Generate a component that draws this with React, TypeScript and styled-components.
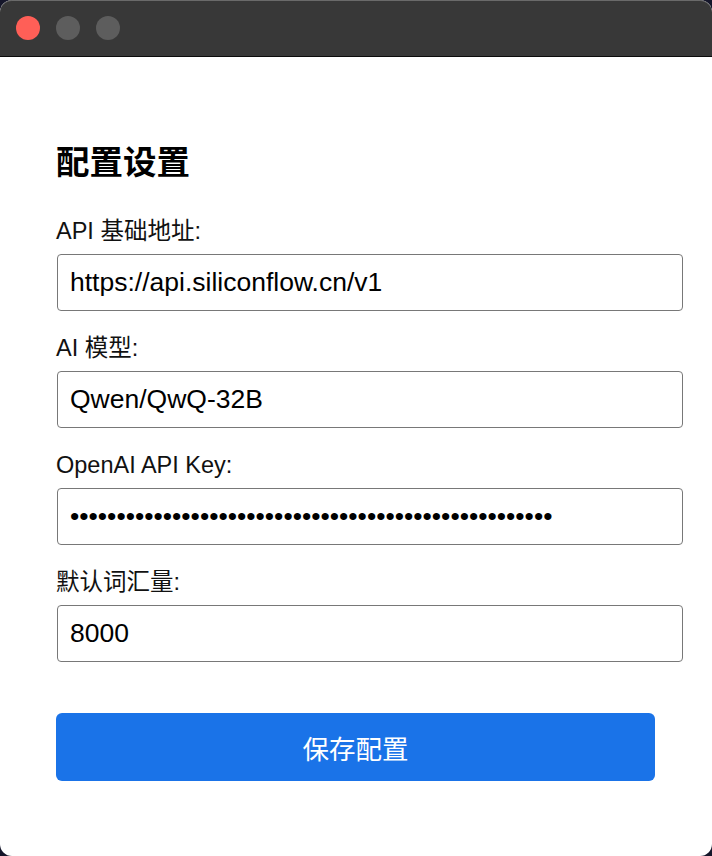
import styled, {createGlobalStyle} from 'styled-components';

const FONT = '"Liberation Sans", "Noto Sans CJK SC", Arial, sans-serif';

const GlobalStyle = createGlobalStyle`
    html, body {
        margin: 0;
        padding: 0;
        background: #15162a;
    }
    body {
        font-family: ${FONT};
    }
`;

interface FieldType {
    id: string;
    label: string;
    value: string;
    type?: string;
}

const FIELDS: FieldType[] = [
    {id: 'baseUrl', label: 'API 基础地址:', value: 'https://api.siliconflow.cn/v1'},
    {id: 'model', label: 'AI 模型:', value: 'Qwen/QwQ-32B'},
    {id: 'apiKey', label: 'OpenAI API Key:', value: 'sk-'.padEnd(52, 'x'), type: 'password'},
    {id: 'vocab', label: '默认词汇量:', value: '8000', type: 'number'},
];

const App = () => {
    return (
        <>
            <GlobalStyle />
            <Window>
                <TitleBar>
                    <Light $color="#ff5f57" />
                    <Light $color="#5d5d5d" />
                    <Light $color="#5d5d5d" />
                </TitleBar>
                <Content>
                    <Heading>配置设置</Heading>
                    <Form>
                        {FIELDS.map((f) => (
                            <Field key={f.id}>
                                <Label htmlFor={f.id}>{f.label}</Label>
                                <Input
                                    id={f.id}
                                    type={f.type ?? 'text'}
                                    defaultValue={f.value}
                                    readOnly
                                />
                            </Field>
                        ))}
                    </Form>
                    <SaveButton>保存配置</SaveButton>
                </Content>
            </Window>
        </>
    );
};

export default App;

const Window = styled.div`
    width: 712px;
    height: 856px;
    border-radius: 12px;
    overflow: hidden;
    background: #ffffff;
    display: flex;
    flex-direction: column;
`;

const TitleBar = styled.div`
    height: 56px;
    flex-shrink: 0;
    background: #383838;
    border-bottom: 1px solid #0c0c0c;
    box-shadow: inset 0 1px 0 #6a6a6a;
    border-radius: 12px 12px 0 0;
    display: flex;
    align-items: center;
    gap: 16px;
    padding-left: 16px;
`;

const Light = styled.span<{$color: string}>`
    width: 24px;
    height: 24px;
    border-radius: 50%;
    background: ${({$color}) => $color};
`;

const Content = styled.div`
    padding: 86px 56px 0;
    display: flex;
    flex-direction: column;
`;

const Heading = styled.h2`
    margin: 0;
    font-size: 33.5px;
    line-height: 40px;
    font-weight: 700;
    color: #000;
`;

const Form = styled.div`
    margin-top: 33px;
    display: flex;
    flex-direction: column;
    gap: 22px;
`;

const Field = styled.div`
    display: flex;
    flex-direction: column;
    gap: 8px;
`;

const Label = styled.label`
    font-size: 23.5px;
    line-height: 30px;
    color: #111;
`;

const Input = styled.input`
    box-sizing: content-box;
    width: 100%;
    height: 31px;
    padding: 12px;
    margin: 0 0 0 1px;
    border: 1px solid #787878;
    border-radius: 4px;
    font-family: ${FONT};
    font-size: 26.5px;
    color: #000;
    background: #fff;
    outline: none;
    -moz-appearance: textfield;
    &::-webkit-outer-spin-button,
    &::-webkit-inner-spin-button {
        -webkit-appearance: none;
        margin: 0;
    }
`;

const SaveButton = styled.button`
    margin-top: 51px;
    width: 599px;
    height: 68px;
    border: none;
    border-radius: 6px;
    background: #1a73e8;
    color: #fff;
    font-family: ${FONT};
    font-size: 26.5px;
    cursor: pointer;
`;
